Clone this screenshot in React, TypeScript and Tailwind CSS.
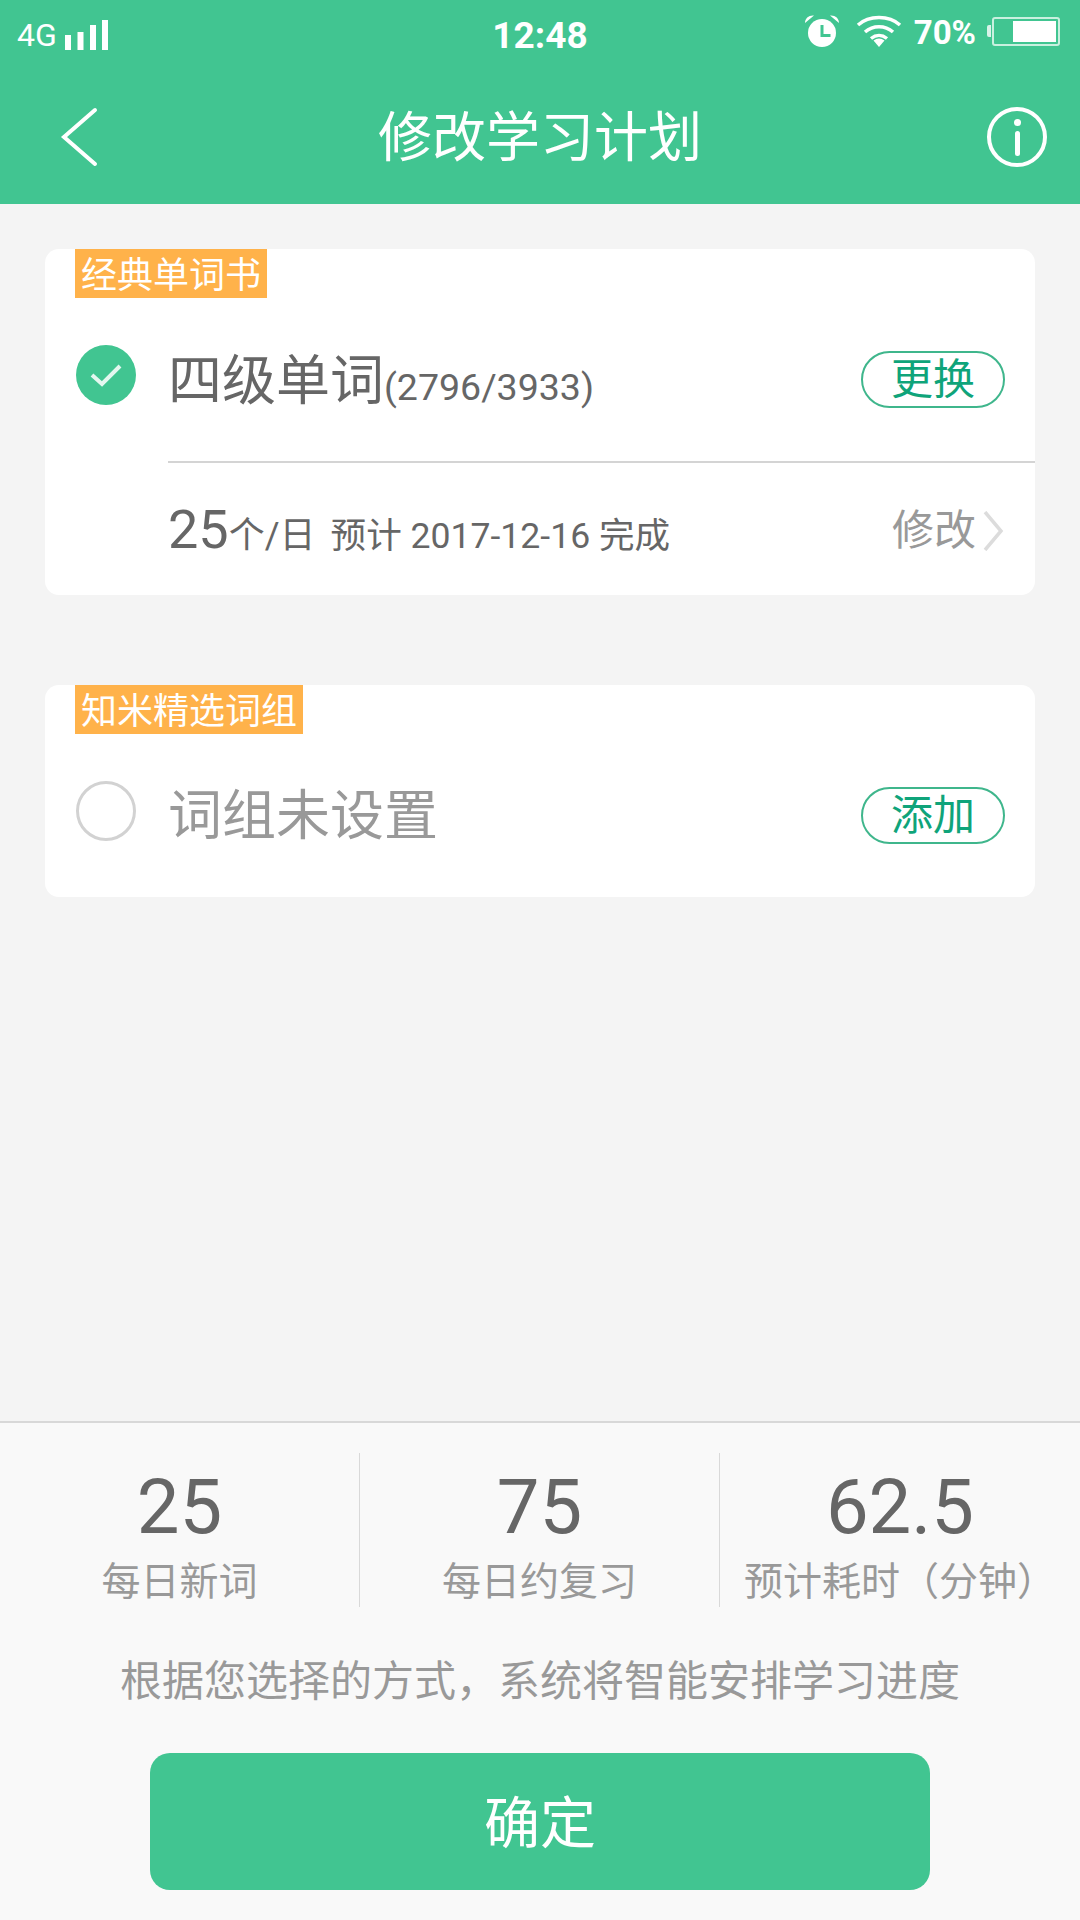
function SignalIcon() {
	return (
		<svg width="43" height="30" viewBox="0 0 43 30" fill="#fff">
			<rect x="0" y="15" width="6" height="15" />
			<rect x="12.500" y="12" width="6" height="18" />
			<rect x="25" y="5" width="6" height="25" />
			<rect x="37" y="0" width="6" height="30" />
		</svg>
	);
}

function AlarmIcon() {
	return (
		<svg width="36" height="34" viewBox="0 0 36 34" fill="#fff">
			<path d="M18 5a14 14 0 1 0 0 28a14 14 0 0 0 0-28z" />
			<path d="M1 9C1 4 5 1 10 1.500z M35 9C35 4 31 1 26 1.500z" />
			<path d="M16.500 11h3v9h7v3h-10z" fill="#41c591" />
		</svg>
	);
}

function WifiIcon() {
	return (
		<svg width="46" height="34" viewBox="0 0 46 34" fill="none" stroke="#fff" strokeWidth="3.500">
			<path d="M2 11C13 1 33 1 44 11" />
			<path d="M9 18C17 11 29 11 37 18" />
			<path d="M15 24.500C20 20.500 26 20.500 31 24.500" />
			<path d="M17.500 26.500Q23 22.500 28.500 26.500L23 33z" fill="#fff" stroke="none" />
		</svg>
	);
}

function BatteryIcon() {
	return (
		<div className="flex items-center">
			<div className="h-[12px] w-[4px] rounded-l-[2px] bg-white/80" />
			<div className="ml-[1px] flex h-[29px] w-[68px] justify-end rounded-[3px] border-2 border-[#c9f0df] p-[2px]">
				<div className="h-full w-[43px] bg-white" />
			</div>
		</div>
	);
}

function StatusBar() {
	return (
		<div className="flex h-[64px] items-end justify-between pb-[14px] pl-[17px] pr-[20px] text-white">
			<div className="flex items-end gap-[8px]">
				<span className="text-[32px] leading-[30px]">4G</span>
				<SignalIcon />
			</div>
			<span className="absolute left-0 right-0 top-[16px] text-center text-[37px] font-bold leading-[40px]">12:48</span>
			<div className="relative flex items-center">
				<AlarmIcon />
				<div className="ml-[16px]">
					<WifiIcon />
				</div>
				<span className="ml-[12px] mt-[4px] text-[33px] font-bold leading-[34px]">70%</span>
				<div className="ml-[11px]">
					<BatteryIcon />
				</div>
			</div>
		</div>
	);
}

function TopBar() {
	return (
		<div className="grid h-[140px] grid-cols-[1fr_auto_1fr] items-center pl-[60px] pr-[33px] pt-[6px] text-white">
			<svg width="38" height="60" viewBox="0 0 38 60" fill="none" stroke="#fff" strokeWidth="4" strokeLinecap="round">
				<path d="M35 3L4 30L35 57" />
			</svg>
			<h1 className="-ml-[27px] mt-[3px] text-[54px] font-normal leading-[72px]">修改学习计划</h1>
			<div className="flex h-[60px] w-[60px] items-center justify-center justify-self-end rounded-full border-[4px] border-white">
				<div className="flex flex-col items-center gap-[5px]">
					<div className="h-[7px] w-[7px] rounded-full bg-white" />
					<div className="h-[25px] w-[5px] rounded-full bg-white" />
				</div>
			</div>
		</div>
	);
}

function Tag({ children }: { children: string }) {
	return (
		<div className="ml-[30px] flex h-[49px] w-fit items-center bg-[#ffb24a] px-[6px] pt-[6px] text-[36px] leading-[43px] text-white">
			{children}
		</div>
	);
}

function PillButton({ children }: { children: string }) {
	return (
		<button className="flex h-[57px] w-[144px] items-center justify-center rounded-full border-2 border-[#3fb68c] text-[42px] leading-none text-[#0fa47a]">
			{children}
		</button>
	);
}

function BookCard() {
	return (
		<section className="h-[346px] overflow-hidden rounded-[14px] bg-white">
			<Tag>经典单词书</Tag>
			<div className="flex h-[163px] items-center pl-[31px] pr-[30px]">
				<div className="-mt-[10px] flex h-[60px] w-[60px] items-center justify-center rounded-full bg-[#41c591]">
					<svg width="34" height="28" viewBox="0 0 34 28" fill="none" stroke="#e4f7ef" strokeWidth="4">
						<path d="M3 14L13 23L31 5" />
					</svg>
				</div>
				<p className="ml-[32px] mt-[4px] flex items-baseline text-[#666]">
					<span className="text-[54px] leading-[70px]">四级单词</span>
					<span className="text-[37.500px] leading-[50px]">(2796/3933)</span>
				</p>
				<div className="ml-auto">
					<PillButton>更换</PillButton>
				</div>
			</div>
			<div className="ml-[123px] h-[2px] bg-[#d4d4d4]" />
			<div className="flex h-[132px] items-center pl-[123px] pr-[30px] pt-[4px] text-[#666]">
				<p className="flex items-baseline">
					<span className="text-[54px] leading-[64px]">25</span>
					<span className="text-[36px]">个/日</span>
					<span className="ml-[15px] text-[35.600px]">预计 2017-12-16 完成</span>
				</p>
				<div className="ml-auto flex items-center text-[#999]">
					<span className="text-[42px] leading-[56px]">修改</span>
					<svg width="21" height="40" viewBox="0 0 21 40" fill="none" stroke="#dcdcdc" strokeWidth="3.500" className="ml-[7px] mr-[1px]">
						<path d="M2 1L18 20L2 39" />
					</svg>
				</div>
			</div>
		</section>
	);
}

function PhraseCard() {
	return (
		<section className="mt-[90px] h-[212px] overflow-hidden rounded-[14px] bg-white">
			<Tag>知米精选词组</Tag>
			<div className="flex h-[163px] items-center pl-[31px] pr-[30px]">
				<div className="-mt-[10px] h-[60px] w-[60px] rounded-full border-[3px] border-[#d2d2d2]" />
				<p className="ml-[32px] mt-[3px] text-[54px] leading-[70px] text-[#999]">词组未设置</p>
				<div className="ml-auto">
					<PillButton>添加</PillButton>
				</div>
			</div>
		</section>
	);
}

const stats = [
	{ value: "25", label: "每日新词" },
	{ value: "75", label: "每日约复习" },
	{ value: "62.5", label: "预计耗时（分钟）" },
];

function SummaryPanel() {
	return (
		<footer className="h-[499px] border-t-2 border-[#d8d8d8] bg-[#f9f9f9]">
			<div className="mt-[30px] grid h-[154px] grid-cols-3 divide-x divide-[#d9d9d9]">
				{stats.map((stat) => (
					<div key={stat.label} className="flex flex-col items-center">
						<span className="mt-[12px] text-[76px] leading-[84px] text-[#666]">{stat.value}</span>
						<span className="mt-[8px] whitespace-nowrap text-[39px] leading-[50px] text-[#999]">{stat.label}</span>
					</div>
				))}
			</div>
			<p className="mt-[50px] text-center text-[42px] leading-[50px] text-[#999]">
				根据您选择的方式，系统将智能安排学习进度
			</p>
			<button className="mx-auto mt-[46px] flex h-[137px] w-[780px] items-center justify-center rounded-[20px] bg-[#41c591] pt-[4px] text-[56px] text-white">
				确定
			</button>
		</footer>
	);
}

export default function App() {
	return (
		<div className="flex h-[1920px] w-[1080px] flex-col overflow-hidden bg-[#f4f4f4] font-['Roboto','Noto_Sans_CJK_SC',sans-serif]">
			<header className="bg-[#41c591]">
				<StatusBar />
				<TopBar />
			</header>
			<main className="flex-1 px-[45px] pt-[45px]">
				<BookCard />
				<PhraseCard />
			</main>
			<SummaryPanel />
		</div>
	);
}
